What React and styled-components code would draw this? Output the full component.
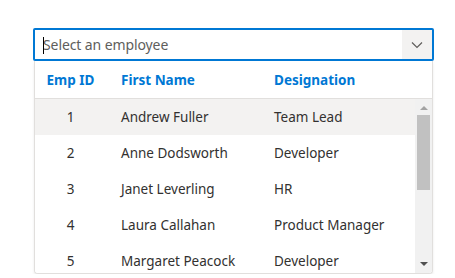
import React, { useState } from "react";
import styled, { createGlobalStyle } from "styled-components";

const GlobalStyle = createGlobalStyle`
    body {
        margin: 0;
        background: #fff;
        font-family: "Noto Sans", "Open Sans", sans-serif;
    }
`;

const employees = [
    { id: 1, name: "Andrew Fuller", role: "Team Lead" },
    { id: 2, name: "Anne Dodsworth", role: "Developer" },
    { id: 3, name: "Janet Leverling", role: "HR" },
    { id: 4, name: "Laura Callahan", role: "Product Manager" },
    { id: 5, name: "Margaret Peacock", role: "Developer" },
];

const App = () => {
    const [hovered] = useState(1);

    return (
        <Page>
            <GlobalStyle />
            <Combo>
                <InputBox>
                    <Caret />
                    <Placeholder>Select an employee</Placeholder>
                    <IconButton>
                        <svg width="12" height="8" viewBox="0 0 12 8">
                            <path
                                d="M1 1.5 L6 6.5 L11 1.5"
                                fill="none"
                                stroke="#605e5c"
                                strokeWidth="1.2"
                            />
                        </svg>
                    </IconButton>
                </InputBox>
                <Popup>
                    <HeaderRow>
                        <HeadCell $center>Emp ID</HeadCell>
                        <HeadCell>First Name</HeadCell>
                        <HeadCell>Designation</HeadCell>
                    </HeaderRow>
                    <Body>
                        <Rows>
                            {employees.map((e) => (
                                <Row key={e.id} $active={e.id === hovered}>
                                    <Cell $center>{e.id}</Cell>
                                    <Cell>{e.name}</Cell>
                                    <Cell>{e.role}</Cell>
                                </Row>
                            ))}
                        </Rows>
                        <Scrollbar>
                            <ArrowUp />
                            <Track>
                                <Thumb />
                            </Track>
                            <ArrowDown />
                        </Scrollbar>
                    </Body>
                </Popup>
            </Combo>
        </Page>
    );
};

export default App;

const Page = styled.div`
    padding: 28px 0 0 33px;
`;

const Combo = styled.div`
    width: 401px;
`;

const InputBox = styled.div`
    position: relative;
    display: flex;
    align-items: center;
    height: 33px;
    box-sizing: border-box;
    border: 2px solid #0078d4;
    border-radius: 2px;
    background: #fff;
`;

const Caret = styled.span`
    position: absolute;
    left: 8px;
    top: 7px;
    width: 1px;
    height: 17px;
    background: #000;
`;

const Placeholder = styled.span`
    flex: 1;
    padding-left: 8px;
    font-size: 14px;
    color: #605e5c;
    letter-spacing: -0.1px;
`;

const IconButton = styled.div`
    width: 30px;
    height: 100%;
    display: flex;
    align-items: center;
    justify-content: center;
    background: #f3f2f1;
`;

const Popup = styled.div`
    margin: 0 1px;
    height: 212px;
    display: flex;
    flex-direction: column;
    border: 1px solid #e1dfdd;
    border-top: none;
    border-radius: 0 0 4px 4px;
    box-shadow: 0 2px 3px rgba(0, 0, 0, 0.08);
    overflow: hidden;
    background: #fff;
`;

const columns = "71px 153px 1fr";

const HeaderRow = styled.div`
    display: grid;
    grid-template-columns: ${columns};
    height: 37px;
    align-items: center;
    border-bottom: 1px solid #e1dfdd;
    padding-right: 17px;
    flex-shrink: 0;
`;

const HeadCell = styled.div`
    font-size: 13.5px;
    font-weight: 700;
    color: #0078d4;
    text-align: ${(p) => (p.$center ? "center" : "left")};
    padding-left: ${(p) => (p.$center ? "0" : "15px")};
`;

const Body = styled.div`
    flex: 1;
    display: flex;
    min-height: 0;
`;

const Rows = styled.div`
    flex: 1;
    overflow: hidden;
`;

const Row = styled.div`
    display: grid;
    grid-template-columns: ${columns};
    height: 36px;
    align-items: center;
    background: ${(p) => (p.$active ? "#f3f2f1" : "#fff")};
`;

const Cell = styled.div`
    font-size: 13.5px;
    color: #323130;
    text-align: ${(p) => (p.$center ? "center" : "left")};
    padding-left: ${(p) => (p.$center ? "0" : "15px")};
    white-space: nowrap;
`;

const Scrollbar = styled.div`
    width: 17px;
    display: flex;
    flex-direction: column;
    align-items: center;
    background: #f1f1f1;
`;

const ArrowUp = styled.div`
    margin: 7px 0 5px;
    width: 0;
    height: 0;
    border-left: 4px solid transparent;
    border-right: 4px solid transparent;
    border-bottom: 4px solid #a3a3a3;
`;

const Track = styled.div`
    flex: 1;
    width: 100%;
    display: flex;
    justify-content: center;
`;

const Thumb = styled.div`
    width: 13px;
    height: 75px;
    background: #c1c1c1;
`;

const ArrowDown = styled.div`
    margin: 5px 0 7px;
    width: 0;
    height: 0;
    border-left: 4px solid transparent;
    border-right: 4px solid transparent;
    border-top: 4px solid #505050;
`;
